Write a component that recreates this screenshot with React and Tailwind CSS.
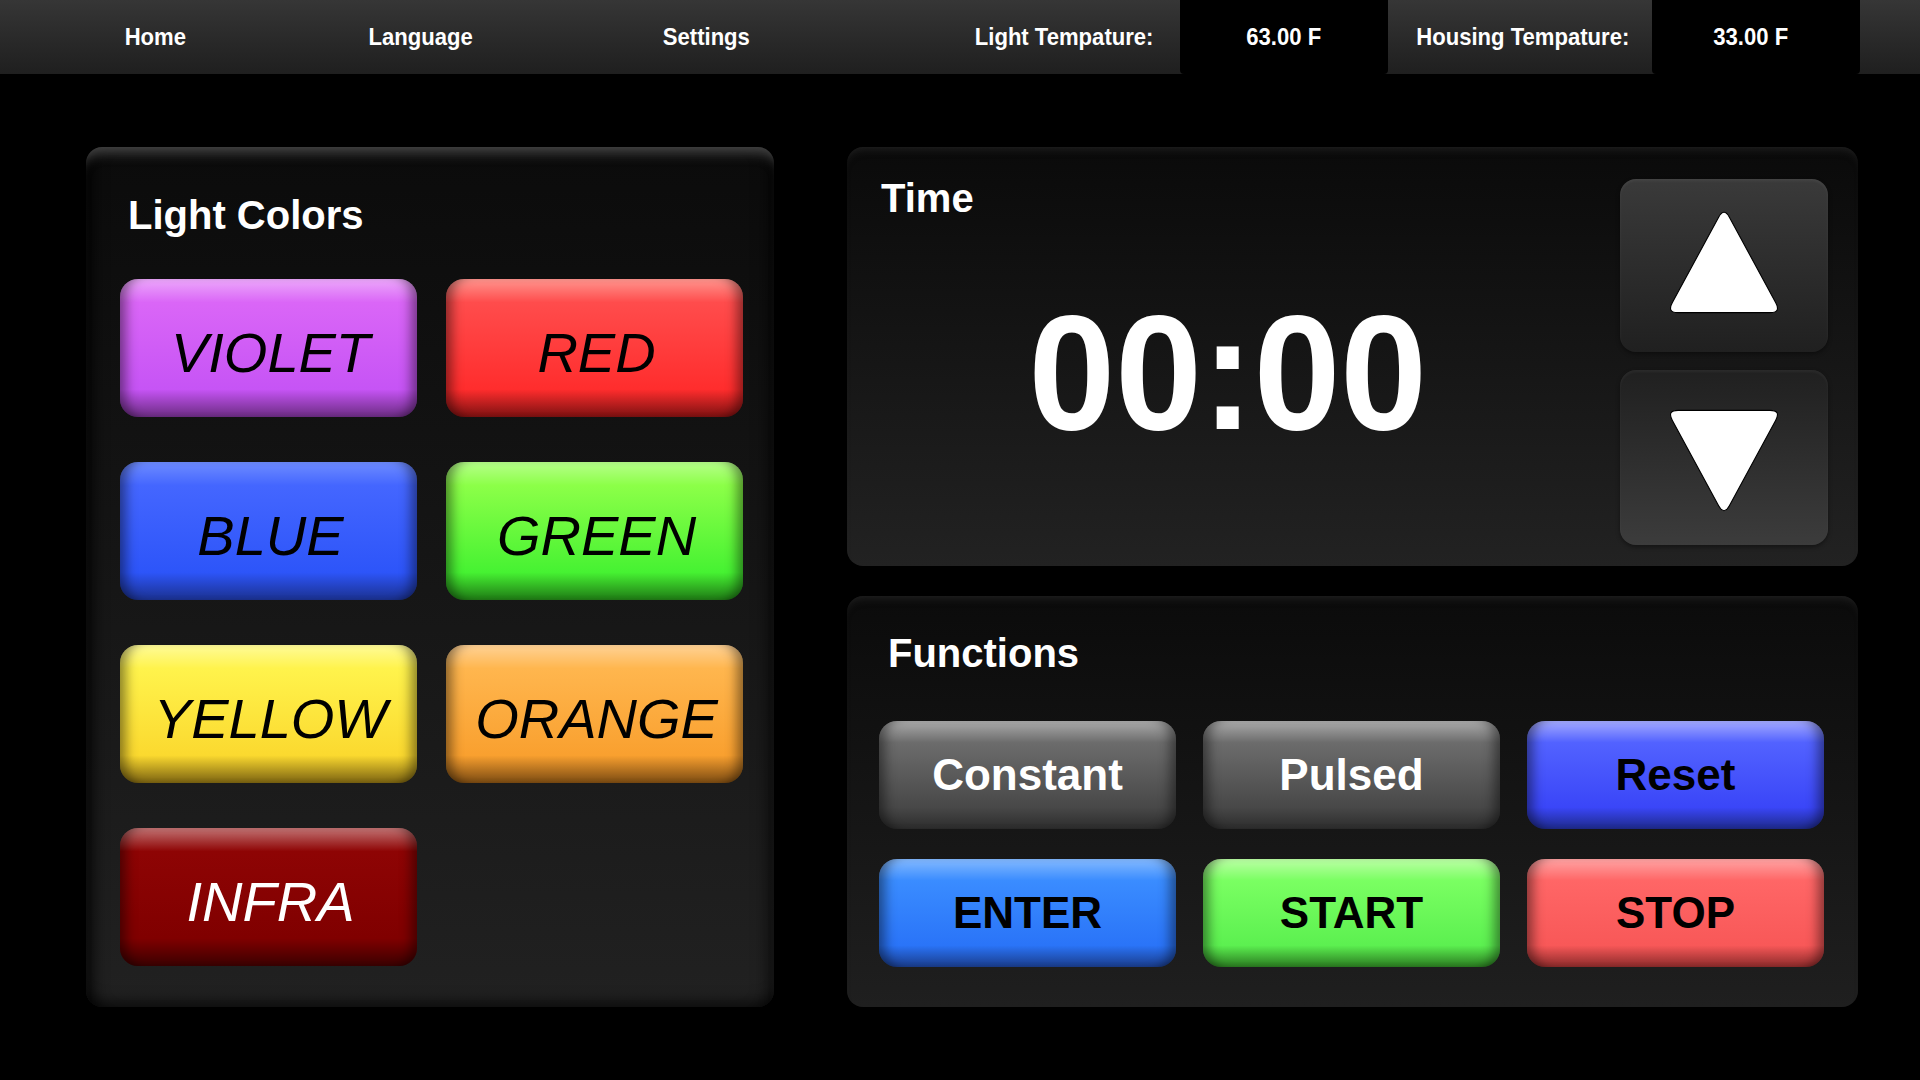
const colorButtons = [
  {
    label: "VIOLET",
    cls: "text-black bg-[linear-gradient(to_bottom,#eca8fb_0%,#da66f7_17%,#c654f5_80%,#6b2c82_100%)]",
  },
  {
    label: "RED",
    cls: "text-black bg-[linear-gradient(to_bottom,#ff958e_0%,#ff4c4c_17%,#ff2d2d_80%,#7c1111_100%)]",
  },
  {
    label: "BLUE",
    cls: "text-black bg-[linear-gradient(to_bottom,#6e8cff_0%,#4466ff_17%,#2d55f9_80%,#1b318f_100%)]",
  },
  {
    label: "GREEN",
    cls: "text-black bg-[linear-gradient(to_bottom,#b6ff8a_0%,#8cff48_17%,#46f232_80%,#1f7a15_100%)]",
  },
  {
    label: "YELLOW",
    cls: "text-black bg-[linear-gradient(to_bottom,#fffb98_0%,#fff34c_17%,#fbd92f_80%,#7a6211_100%)]",
  },
  {
    label: "ORANGE",
    cls: "text-black bg-[linear-gradient(to_bottom,#ffd295_0%,#ffb64e_17%,#f9a02f_80%,#7a4a12_100%)]",
  },
  {
    label: "INFRA",
    cls: "text-white bg-[linear-gradient(to_bottom,#c27474_0%,#8e0404_17%,#800000_80%,#3a0000_100%)]",
  },
];

const functionButtons = [
  {
    label: "Constant",
    cls: "text-white bg-[linear-gradient(to_bottom,#ababab_0%,#6c6c6c_20%,#484848_80%,#2c2c2c_100%)]",
  },
  {
    label: "Pulsed",
    cls: "text-white bg-[linear-gradient(to_bottom,#ababab_0%,#6c6c6c_20%,#484848_80%,#2c2c2c_100%)]",
  },
  {
    label: "Reset",
    cls: "text-black bg-[linear-gradient(to_bottom,#a4aaff_0%,#5262ff_20%,#3a46f8_80%,#1e2a8a_100%)]",
  },
  {
    label: "ENTER",
    cls: "text-black bg-[linear-gradient(to_bottom,#84baff_0%,#3a8cff_20%,#2a74f8_80%,#1a3c8a_100%)]",
  },
  {
    label: "START",
    cls: "text-black bg-[linear-gradient(to_bottom,#bcffa6_0%,#7aff62_20%,#5cf050_80%,#2a7a20_100%)]",
  },
  {
    label: "STOP",
    cls: "text-black bg-[linear-gradient(to_bottom,#ffa4a4_0%,#ff6666_20%,#f85858_80%,#8a2a2a_100%)]",
  },
];

const bevel =
  "shadow-[inset_14px_0_12px_-8px_rgba(0,0,0,0.45),inset_-14px_0_12px_-8px_rgba(0,0,0,0.45)]";

function Triangle({ down }) {
  return (
    <svg width="124" height="112" viewBox="0 0 110 100">
      <path
        d={
          down
            ? "M 50.2 88.2 Q 55 97 59.8 88.2 L 101.2 11.8 Q 106 3 96 3 L 14 3 Q 4 3 8.8 11.8 Z"
            : "M 50.2 11.8 Q 55 3 59.8 11.8 L 101.2 88.2 Q 106 97 96 97 L 14 97 Q 4 97 8.8 88.2 Z"
        }
        fill="#fff"
        stroke="#000"
        strokeWidth="1"
      />
    </svg>
  );
}

function NavText({ children }) {
  return <span className="inline-block scale-x-[0.92]">{children}</span>;
}

export default function App() {
  return (
    <div className="w-[1920px] h-[1080px] bg-black overflow-hidden font-['Liberation_Sans',Arial,sans-serif]">
      {/* top bar */}
      <div className="h-[74px] flex bg-linear-to-b from-[#363636] to-[#1f1f1f] text-white font-bold text-[24px]">
        <div className="w-[310px] flex items-center justify-center"><NavText>Home</NavText></div>
        <div className="w-[222px] flex items-center justify-center"><NavText>Language</NavText></div>
        <div className="w-[348px] flex items-center justify-center"><NavText>Settings</NavText></div>
        <div className="w-[68px]" />
        <div className="w-[232px] flex items-center justify-center"><NavText>Light Tempature:</NavText></div>
        <div className="w-[208px] flex items-center justify-center bg-black rounded-b-[4px]"><NavText>63.00 F</NavText></div>
        <div className="w-[264px] flex items-center justify-center pl-[6px]"><NavText>Housing Tempature:</NavText></div>
        <div className="w-[208px] flex items-center justify-center pr-[10px] bg-black rounded-b-[4px]"><NavText>33.00 F</NavText></div>
        <div className="flex-1" />
      </div>

      <div className="flex pt-[73px] pl-[86px] gap-[73px]">
        {/* light colors */}
        <div className="w-[688px] h-[860px] rounded-[16px] bg-linear-to-b from-[#0b0b0b] to-[#212121] pl-[34px] pt-[48px] shadow-[inset_0_14px_12px_-8px_rgba(75,75,75,0.9),inset_18px_0_16px_-12px_rgba(0,0,0,0.85),inset_-18px_0_16px_-12px_rgba(0,0,0,0.6),inset_0_-16px_14px_-10px_rgba(0,0,0,0.55)]">
          <h2 className="ml-[8px] text-[40px] leading-none font-bold text-white">Light Colors</h2>
          <div className="mt-[44px] grid grid-cols-[297px_297px] gap-x-[29px] gap-y-[45px]">
            {colorButtons.map((b) => (
              <button
                key={b.label}
                className={`h-[138px] rounded-[18px] flex items-center justify-center pt-[10px] pl-[4px] text-[56px] italic leading-none ${bevel} ${b.cls}`}
              >
                {b.label}
              </button>
            ))}
          </div>
        </div>

        <div className="w-[1011px] flex flex-col gap-[30px]">
          {/* time */}
          <div className="h-[419px] rounded-[16px] bg-linear-to-b from-[#0a0a0a] to-[#222222] flex shadow-[inset_0_8px_8px_-6px_rgba(50,50,50,0.6)]">
            <div className="flex-1 pl-[34px] pt-[31px]">
              <h2 className="text-[40px] leading-none font-bold text-white">Time</h2>
              <div className="mt-[73px] pr-[46px] text-center text-[164px] leading-none font-bold text-white">
                <span className="inline-block scale-x-[0.95]">00:00</span>
              </div>
            </div>
            <div className="flex flex-col gap-[18px] pt-[32px] pr-[30px] pb-[21px]">
              <button className="w-[208px] h-[173px] rounded-[16px] flex items-center justify-center pb-[12px] bg-linear-to-b from-[#3a3a3a] to-[#202020] shadow-[inset_0_2px_3px_rgba(255,255,255,0.06),0_2px_4px_rgba(0,0,0,0.4)]">
                <Triangle />
              </button>
              <button className="w-[208px] h-[175px] rounded-[16px] flex items-center justify-center pt-[10px] bg-linear-to-b from-[#202020] to-[#3c3c3c] shadow-[inset_0_2px_3px_rgba(255,255,255,0.05),0_2px_4px_rgba(0,0,0,0.4)]">
                <Triangle down />
              </button>
            </div>
          </div>

          {/* functions */}
          <div className="h-[411px] rounded-[16px] bg-linear-to-b from-[#0b0b0b] to-[#1f1f1f] pl-[32px] pt-[37px] shadow-[inset_0_8px_8px_-6px_rgba(50,50,50,0.6)]">
            <h2 className="ml-[9px] text-[40px] leading-none font-bold text-white">Functions</h2>
            <div className="mt-[48px] grid grid-cols-[297px_297px_297px] gap-x-[27px] gap-y-[30px]">
              {functionButtons.map((b) => (
                <button
                  key={b.label}
                  className={`h-[108px] rounded-[18px] flex items-center justify-center text-[44px] font-bold leading-none ${bevel} ${b.cls}`}
                >
                  {b.label}
                </button>
              ))}
            </div>
          </div>
        </div>
      </div>
    </div>
  );
}
